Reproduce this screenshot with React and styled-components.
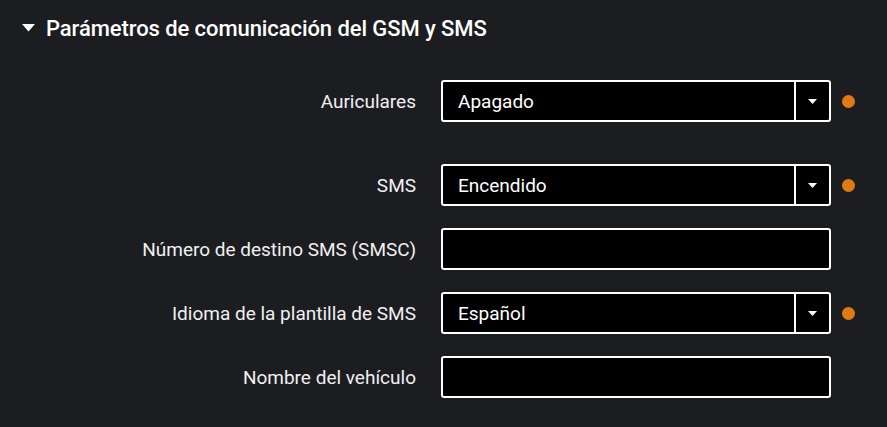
import styled, { createGlobalStyle } from "styled-components";

const GlobalStyle = createGlobalStyle`
    html, body {
        margin: 0;
        padding: 0;
        background: #1c1d21;
    }
    body {
        font-family: Roboto, "Liberation Sans", sans-serif;
        color: #ececec;
    }
`;

const rows = [
    { label: "Auriculares", value: "Apagado", select: true },
    { label: "SMS", value: "Encendido", select: true, spaced: true },
    { label: "Número de destino SMS (SMSC)", value: "" },
    { label: "Idioma de la plantilla de SMS", value: "Español", select: true },
    { label: "Nombre del vehículo", value: "" },
];

const Caret = () => (
    <svg width="13" height="8" viewBox="0 0 13 8">
        <path d="M0 0 L13 0 L6.5 7.5 Z" fill="#ffffff" />
    </svg>
);

const SmallCaret = () => (
    <svg width="9" height="5" viewBox="0 0 9 5">
        <path d="M0 0 L9 0 L4.5 5 Z" fill="#ffffff" />
    </svg>
);

const App = () => {
    return (
        <Page>
            <GlobalStyle />
            <Section>
                <Section__header>
                    <Caret />
                    <Section__title>Parámetros de comunicación del GSM y SMS</Section__title>
                </Section__header>

                <Form>
                    {rows.map((row) => (
                        <Form__row key={row.label} $spaced={row.spaced}>
                            <Form__label>{row.label}</Form__label>
                            {row.select ? (
                                <Select>
                                    <Select__value>{row.value}</Select__value>
                                    <Select__button>
                                        <SmallCaret />
                                    </Select__button>
                                </Select>
                            ) : (
                                <Input />
                            )}
                            {row.select ? <Dot /> : <span />}
                        </Form__row>
                    ))}
                </Form>
            </Section>
        </Page>
    );
};

const Page = styled.div`
    width: 887px;
    height: 427px;
    background: #1c1d21;
    overflow: hidden;
`;

const Section = styled.div`
    padding: 16px 0 0 22px;
`;

const Section__header = styled.div`
    display: flex;
    align-items: center;
    gap: 11px;
    height: 24px;
`;

const Section__title = styled.h2`
    margin: 0;
    font-size: 22px;
    font-weight: 500;
    letter-spacing: -0.08px;
    color: #ffffff;
`;

const Form = styled.div`
    margin-top: 40px;
    display: flex;
    flex-direction: column;
    gap: 22px;
`;

const Form__row = styled.div`
    display: grid;
    grid-template-columns: 394px 390px 13px;
    column-gap: 25px;
    align-items: center;
    margin-top: ${(p) => (p.$spaced ? "20px" : "0")};

    & > *:last-child {
        margin-left: -14px;
    }
`;

const Form__label = styled.label`
    text-align: right;
    font-size: 19px;
    color: #f0f0f0;
`;

const fieldBox = `
    box-sizing: border-box;
    height: 42px;
    border: 2px solid #ffffff;
    border-radius: 3px;
    background: #000000;
`;

const Input = styled.div`
    ${fieldBox}
`;

const Select = styled.div`
    ${fieldBox}
    display: flex;
    align-items: stretch;
`;

const Select__value = styled.div`
    flex: 1;
    display: flex;
    align-items: center;
    padding-left: 15px;
    font-size: 19px;
    color: #ffffff;
`;

const Select__button = styled.div`
    width: 33px;
    border-left: 2px solid #ffffff;
    display: flex;
    align-items: center;
    justify-content: center;
`;

const Dot = styled.span`
    width: 13px;
    height: 13px;
    border-radius: 50%;
    background: #e07b14;
`;

export default App;
